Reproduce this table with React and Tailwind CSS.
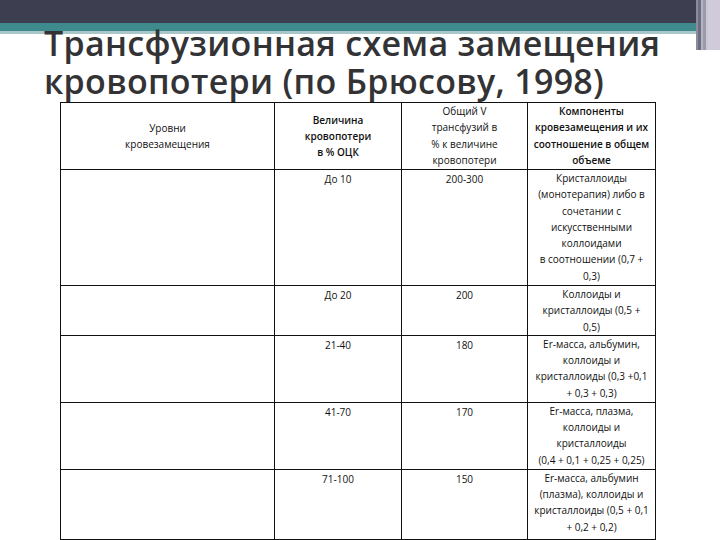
import React from "react";

const rows = [
  { h: 116, c2: ["До 10"], c3: ["200-300"], c4: ["Кристаллоиды", "(монотерапия) либо в", "сочетании с", "искусственными", "коллоидами", "в соотношении (0,7 +", "0,3)"] },
  { h: 48, c2: ["До 20"], c3: ["200"], c4: ["Коллоиды и", "кристаллоиды (0,5 +", "0,5)"] },
  { h: 67, c2: ["21-40"], c3: ["180"], c4: ["Er-масса, альбумин,", "коллоиды и", "кристаллоиды (0,3 +0,1", "+ 0,3 + 0,3)"] },
  { h: 67, c2: ["41-70"], c3: ["170"], c4: ["Er-масса, плазма,", "коллоиды и", "кристаллоиды", "(0,4 + 0,1 + 0,25 + 0,25)"] },
  { h: 70, c2: ["71-100"], c3: ["150"], c4: ["Er-масса, альбумин", "(плазма), коллоиды и", "кристаллоиды (0,5 + 0,1", "+ 0,2 + 0,2)"] },
];

function Lines({ items, className = "" }) {
  return (
    <div className={"flex flex-col items-center " + className}>
      {items.map((t, i) => (
        <div key={i} className="whitespace-nowrap leading-[16.3px]">{t}</div>
      ))}
    </div>
  );
}

export default function App() {
  return (
    <div className="relative w-[720px] h-[540px] overflow-hidden bg-white" style={{ fontFamily: "'Open Sans', 'Noto Sans', sans-serif" }}>
      <div className="h-[23px] bg-[#3d3f51]" />
      <div className="h-[8px] bg-[#3f8a8c]" />
      <div className="h-[3px] bg-[#a9c6c9]" />

      <div className="absolute top-0 right-0 h-[50px] w-[24px] flex">
        <div className="w-[2px] bg-[#8b8b9c]" />
        <div className="w-[3px] bg-[#6c6d80]" />
        <div className="w-[2px] bg-[#b3b3c3]" />
        <div className="w-[3px] bg-[#9a9aab]" />
        <div className="w-[2px] bg-[#c9c8d6]" />
        <div className="flex-1 bg-[#cfcbdb]" />
      </div>

      <div className="relative z-10 -mt-[10px] pl-[44px] text-[#333336] font-semibold text-[34px] leading-[38px] tracking-[0.3px]">
        <div className="whitespace-nowrap">Трансфузионная схема замещения</div>
        <div className="whitespace-nowrap">кровопотери (по Брюсову, 1998)</div>
      </div>

      <div className="absolute left-[60px] top-[102px]">
        <table className="border-collapse table-fixed text-[10px] text-[#111] font-medium" style={{ fontFamily: "'Open Sans', sans-serif" }}>
          <tbody>
            <tr style={{ height: 67 }}>
              <td className="w-[214px] border-[1.5px] border-[#111] align-middle p-0">
                <Lines items={["Уровни", "кровезамещения"]} className="font-medium" />
              </td>
              <td className="w-[127px] border-[1.5px] border-[#111] align-middle p-0">
                <Lines items={["Величина", "кровопотери", "в % ОЦК"]} className="font-semibold" />
              </td>
              <td className="w-[126px] border-[1.5px] border-[#111] align-top p-0">
                <Lines items={["Общий V", "трансфузий в", "% к величине", "кровопотери"]} className="font-medium" />
              </td>
              <td className="w-[128px] border-[1.5px] border-[#111] align-top p-0">
                <Lines items={["Компоненты", "кровезамещения и их", "соотношение в общем", "объеме"]} className="font-semibold" />
              </td>
            </tr>
            {rows.map((r, i) => (
              <tr key={i} style={{ height: r.h }}>
                <td className="border-[1.5px] border-[#111] p-0" />
                <td className="border-[1.5px] border-[#111] align-top p-0 pt-[1px]">
                  <Lines items={r.c2} />
                </td>
                <td className="border-[1.5px] border-[#111] align-top p-0 pt-[1px]">
                  <Lines items={r.c3} />
                </td>
                <td className="border-[1.5px] border-[#111] align-top p-0">
                  <Lines items={r.c4} />
                </td>
              </tr>
            ))}
          </tbody>
        </table>
      </div>
    </div>
  );
}
